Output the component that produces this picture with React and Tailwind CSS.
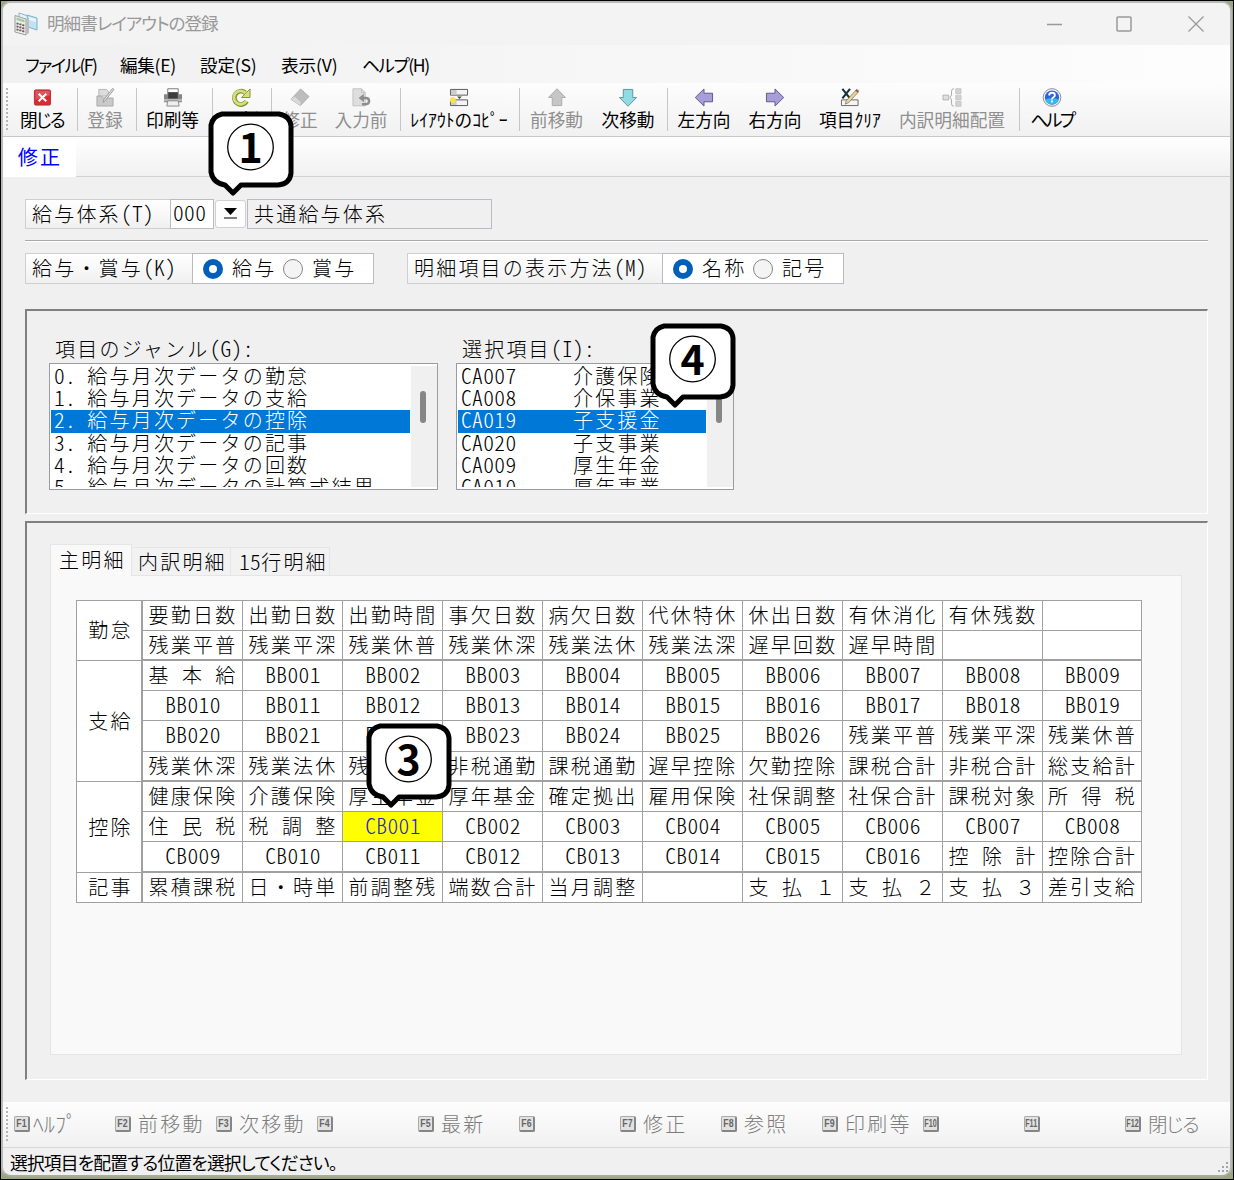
import React from "react";

const TOOLBAR = [
  {
    className: "w-[66px]",
    items: [{ icon: "close", label: "閉じる", width: "w-[60px]", text: "tracking-[-1.7px] [font-feature-settings:'palt']" }],
  },
  {
    className: "w-[59px]",
    items: [{ icon: "save", label: "登録", width: "w-[54px]", disabled: true }],
  },
  {
    className: "w-[76px]",
    items: [{ icon: "print", label: "印刷等", width: "w-[71px]" }],
  },
  {
    className: "w-[59px]",
    items: [{ icon: "refresh", label: "最新", width: "w-[56px]" }],
  },
  {
    className: "w-[129px]",
    items: [
      { icon: "eraser", label: "修正", width: "w-[56px]", disabled: true },
      { icon: "undo", label: "入力前", width: "w-[66px]", disabled: true },
    ],
  },
  {
    className: "w-[119px]",
    items: [{ icon: "copy", label: "ﾚｲｱｳﾄのｺﾋﾟｰ", width: "w-[116px]" }],
  },
  {
    className: "w-[148px]",
    items: [
      { icon: "up", label: "前移動", width: "w-[73px]", disabled: true },
      { icon: "down", label: "次移動", width: "w-[70px]" },
    ],
  },
  {
    className: "w-[352px]",
    items: [
      { icon: "left", label: "左方向", width: "w-[72px]" },
      { icon: "right", label: "右方向", width: "w-[70px]" },
      { icon: "clear", label: "項目ｸﾘｱ", width: "w-[80px]" },
      { icon: "tree", label: "内訳明細配置", width: "w-[124px]", disabled: true },
    ],
  },
  {
    className: "w-[64px] border-r-0",
    items: [{ icon: "help", label: "ヘルプ", width: "w-[64px]", text: "tracking-[-2.4px] [font-feature-settings:'palt']" }],
  },
];

const GENRES = [
  "0. 給与月次データの勤怠",
  "1. 給与月次データの支給",
  "2. 給与月次データの控除",
  "3. 給与月次データの記事",
  "4. 給与月次データの回数",
  "5. 給与月次データの計算式結果",
];

const ITEMS = [
  ["CA007", "介護保険"],
  ["CA008", "介保事業"],
  ["CA019", "子支援金"],
  ["CA020", "子支事業"],
  ["CA009", "厚生年金"],
  ["CA010", "厚年事業"],
];

const GROUPS = [
  {
    name: "勤怠",
    span: "row-span-2",
    rows: [
      ["要勤日数", "出勤日数", "出勤時間", "事欠日数", "病欠日数", "代休特休", "休出日数", "有休消化", "有休残数", ""],
      ["残業平普", "残業平深", "残業休普", "残業休深", "残業法休", "残業法深", "遅早回数", "遅早時間", "", ""],
    ],
  },
  {
    name: "支給",
    span: "row-span-4",
    rows: [
      ["基 本 給", "BB001", "BB002", "BB003", "BB004", "BB005", "BB006", "BB007", "BB008", "BB009"],
      ["BB010", "BB011", "BB012", "BB013", "BB014", "BB015", "BB016", "BB017", "BB018", "BB019"],
      ["BB020", "BB021", "BB022", "BB023", "BB024", "BB025", "BB026", "残業平普", "残業平深", "残業休普"],
      ["残業休深", "残業法休", "残業法深", "非税通勤", "課税通勤", "遅早控除", "欠勤控除", "課税合計", "非税合計", "総支給計"],
    ],
  },
  {
    name: "控除",
    span: "row-span-3",
    rows: [
      ["健康保険", "介護保険", "厚生年金", "厚年基金", "確定拠出", "雇用保険", "社保調整", "社保合計", "課税対象", "所 得 税"],
      ["住 民 税", "税 調 整", "CB001", "CB002", "CB003", "CB004", "CB005", "CB006", "CB007", "CB008"],
      ["CB009", "CB010", "CB011", "CB012", "CB013", "CB014", "CB015", "CB016", "控 除 計", "控除合計"],
    ],
  },
  {
    name: "記事",
    span: "row-span-1",
    rows: [
      ["累積課税", "日・時単", "前調整残", "端数合計", "当月調整", "", "支 払 １", "支 払 ２", "支 払 ３", "差引支給"],
    ],
  },
];

const FKEYS = ["ﾍﾙﾌﾟ", "前移動", "次移動", "", "最新", "", "修正", "参照", "印刷等", "", "", "閉じる"];

// Fixed pitch text: full width characters take 22.2px, half width ones 11.1px
function Mono({ children }) {
  const runs = children.match(/ |[!-~｡-ﾟ]+|[^ -~｡-ﾟ]+/g) || [];
  return (
    <span className="mb-[2px] inline-block h-[22px] whitespace-pre text-[20px] leading-[22px] font-light">
      {runs.map((run, i) => {
        if (run === " ") {
          return <span key={i} className="inline-block w-[11.1px]"> </span>;
        }
        if (/^[!-~｡-ﾟ]/.test(run)) {
          return (
            <span key={i} className="text-[21.5px] leading-[20px] tracking-[0.35px] [font-feature-settings:'hwid']">
              {run}
            </span>
          );
        }
        return <span key={i} className="tracking-[2.2px]">{run}</span>;
      })}
    </span>
  );
}

function Icon({ name }) {
  const common = { width: 20, height: 20, viewBox: "0 0 20 20", fill: "none" };
  switch (name) {
    case "close":
      return (
        <svg {...common}>
          <rect x="2" y="2" width="17" height="16" rx="1.5" fill="#d92b35" stroke="#a8323a" />
          <path d="M3 3h15v5L3 12z" fill="#ee6a6e" opacity=".6" />
          <path d="M6.500 6l8 8M14.500 6l-8 8" stroke="#fff" strokeWidth="2.2" />
        </svg>
      );
    case "save":
      return (
        <svg {...common}>
          <path d="M3.500 1.500h8l2 2v5h-10z" fill="#dcdcdc" stroke="#b5b5b5" />
          <path d="M1.500 8.500h5l1 2h11v8.500h-17z" fill="#c9c9c9" stroke="#ababab" />
          <path d="M19.500 1.500l-9.500 12-2 1.500.5-2.500 9.500-12z" fill="#e5e5e5" stroke="#999" />
        </svg>
      );
    case "print":
      return (
        <svg {...common}>
          <path d="M4.500.8h11v6h-11z" fill="#fff" stroke="#777" />
          <path d="M.5 6.500h4v-2h11v2h4V15H.5z" fill="#858585" />
          <path d="M5 4.500h10v6.500H5z" fill="#3d3d3d" />
          <path d="M.5 11.500h19V14H.5z" fill="#b8b8b8" />
          <path d="M4.500 13.500h11l1 5.500h-13z" fill="#eee" stroke="#888" />
        </svg>
      );
    case "refresh":
      return (
        <svg {...common}>
          <path d="M16 14A7 7 0 1 1 14.500 5" stroke="#7f9136" strokeWidth="5" />
          <path d="M19.500 1v9h-9z" fill="#d5e07a" stroke="#7f9136" strokeLinejoin="round" />
          <path d="M15.600 13.500A7 7 0 1 1 14.800 5.500" stroke="#d5e07a" strokeWidth="3" />
        </svg>
      );
    case "eraser":
      return (
        <svg {...common}>
          <path d="M10.500 1l9 8-9 9.500-10-6.500z" fill="#bdbdbd" stroke="#b0b0b0" />
          <path d="M.5 12l10 6.500v-4L4 9z" fill="#d9d9d9" />
        </svg>
      );
    case "undo":
      return (
        <svg {...common}>
          <path d="M1.500.8h9l4 4v14h-13z" fill="#dedede" stroke="#c2c2c2" />
          <path d="M10.500.8v4h4" stroke="#c2c2c2" />
          <path d="M12 10.500h3q3.500 0 3.500 3.200T15 17h-4" stroke="#8e8e8e" strokeWidth="2.600" />
          <path d="M13 6v9l-5.500-4.500z" fill="#8e8e8e" />
        </svg>
      );
    case "copy":
      return (
        <svg {...common}>
          <path d="M1 1.500h18v6H1zM1 12.500h18v6H1z" fill="#f4f4f4" stroke="#555" />
          <path d="M1.500 2h6v5h-6zM1.500 13h6v5h-6z" fill="#ccc" />
          <path d="M8 9h5l-2.500 2.500z" fill="#444" />
          <circle cx="3.500" cy="12.500" r="3" fill="#ffe14d" />
        </svg>
      );
    case "up":
      return (
        <svg {...common}>
          <path d="M10 .8l9 9.200h-4v8.500H5V10H1z" fill="#c6c6c6" stroke="#ababab" />
        </svg>
      );
    case "down":
      return (
        <svg {...common}>
          <path d="M10 19.200L1 10h4V1.500h10V10h4z" fill="#8fdde2" stroke="#5d929a" />
        </svg>
      );
    case "left":
      return (
        <svg {...common}>
          <path d="M.8 10L10 1v4.500h9v9h-9V19z" fill="#a79ddb" stroke="#5c5980" />
        </svg>
      );
    case "right":
      return (
        <svg {...common}>
          <path d="M19.200 10L10 1v4.500H1v9h9V19z" fill="#a79ddb" stroke="#5c5980" />
        </svg>
      );
    case "clear":
      return (
        <svg {...common}>
          <path d="M1 12.500h17.500v6H1z" fill="#f5f5f5" stroke="#666" />
          <path d="M2 1l8 10M10 1L2 11" stroke="#173238" strokeWidth="2.200" />
          <path d="M5 17l1-3.500L16.500 2l2.500 2L8.500 15.500z" fill="#ecd09a" stroke="#8a7450" strokeWidth=".8" />
          <path d="M15.500 3l1.500-2 2.500 2-1.500 2z" fill="#b0505a" />
        </svg>
      );
    case "tree":
      return (
        <svg {...common}>
          <path d="M.5 7.500h6v5h-6z" fill="#e0e0e0" stroke="#b0b0b0" />
          <path d="M12 .8q-2.500 0-2.500 2.500v4.200L8 10l1.500 2.500v4.200q0 2.500 2.500 2.500" stroke="#a8a8a8" />
          <path d="M14 .8h5.500v5H14zM14 7.500h5.500v5H14zM14 14.200h5.500v5H14z" fill="#d2d2d2" stroke="#c6c6c6" />
        </svg>
      );
    default:
      return (
        <svg {...common}>
          <circle cx="10" cy="10" r="9.300" fill="#f2f2f2" stroke="#8a8a8a" />
          <circle cx="10" cy="10" r="7.500" fill="#2d63d8" />
          <path d="M2.800 12a7.500 7.500 0 0 0 14.400 0Q10 9.500 2.800 12z" fill="#35b8f0" />
          <path d="M7 8q0-3 3-3t3 2.500q0 1.500-1.500 2.200T10 12" stroke="#fff" strokeWidth="1.900" />
          <rect x="9" y="13.200" width="2" height="2" fill="#fff" />
        </svg>
      );
  }
}

function AppIcon() {
  return (
    <svg width="24" height="24" viewBox="0 0 24 24" fill="none">
      <path d="M5 1l9 3v5L5 7z" fill="#e6f4fb" stroke="#8db5c9" />
      <path d="M13 3l10 3v12l-9-3z" fill="#bfe3f3" stroke="#7fb2ca" />
      <path d="M15 5l7 2v3l-7-2z" fill="#e9f7fd" />
      <path d="M1 3.500L12 7v16L1 20z" fill="#ededed" stroke="#9c9c9c" />
      <path d="M12 7l3-1v15l-3 2z" fill="#bdbdbd" />
      <path d="M2.500 5.500l8 2.500v2.500l-8-2.500z" fill="#9ecb9f" />
      <path d="M2.500 11.300l8 2.300M2.500 14.300l8 2.300M2.500 17.300l8 2.300" stroke="#705c5c" strokeWidth="1.900" strokeDasharray="2.100 .9" />
    </svg>
  );
}

function Callout({ number, className }) {
  return (
    <svg className={`absolute ${className}`} width="86" height="86" viewBox="0 0 86 86">
      <path
        d="M14 3h57q11 2 12 12v47q-1 11-13 12H33l-8 8-8-8q-12-2-14-13V14Q5 5 14 3z"
        fill="#fff"
        stroke="#000"
        strokeWidth="5"
        strokeLinejoin="round"
      />
      <circle cx="42.500" cy="36" r="22.800" fill="none" stroke="#000" strokeWidth="1.300" />
      <text x="42.500" y="51.500" textAnchor="middle" fontSize="41" fontWeight="700" fontFamily="'Noto Sans CJK JP', sans-serif">
        {number}
      </text>
    </svg>
  );
}

function Radio({ checked }) {
  return checked ? (
    <span className="h-5 w-5 rounded-full border-[6px] border-[#005fb8] bg-white" />
  ) : (
    <span className="h-5 w-5 rounded-full border border-[#868686] bg-[#f4f4f4]" />
  );
}

function Caption({ children, className }) {
  return (
    <div className={`flex items-center border border-r-0 border-[#cfcfcf] bg-gradient-to-b from-white to-[#f0f0f0] pt-px pl-[6px] ${className}`}>
      <Mono>{children}</Mono>
    </div>
  );
}

function RadioBox({ options }) {
  return (
    <div className="flex w-[182px] items-center border border-[#b9bac2] bg-white pl-[10px]">
      <Radio checked />
      <span className="mt-px ml-[9px] flex w-[51px]"><Mono>{options[0]}</Mono></span>
      <Radio />
      <span className="mt-px ml-[9px] flex"><Mono>{options[1]}</Mono></span>
    </div>
  );
}

function ListBox({ className, children }) {
  return (
    <div className={`flex h-[127px] border border-[#9a9ca4] bg-white py-[2px] pl-px ${className}`}>
      <div className="flex-1 overflow-hidden">{children}</div>
      <div className="ml-px w-[26px] bg-[#f0f0f0] pt-[25px] pl-[9px]">
        <div className="h-8 w-[6px] rounded-full bg-[#868686]" />
      </div>
    </div>
  );
}

function Grip({ className }) {
  return <div className={`w-[2px] bg-[repeating-linear-gradient(to_bottom,#b4b4b4_0_2px,transparent_2px_4px)] ${className}`} />;
}

export default function App() {
  return (
    <div
      lang="ja"
      className="relative h-[1180px] w-[1234px] overflow-hidden border border-black bg-[#9aa77c] font-['Noto_Sans_CJK_JP',sans-serif] text-black"
    >
      <div className="flex h-[1176px] w-[1231px] flex-col overflow-hidden rounded-[10px] border-2 border-[#b9b9b9] border-b-[#a9ab9d] bg-[#f0f0f0]">
        {/* Title bar */}
        <div className="flex h-[42px] shrink-0 items-center bg-[#f3f3f3] pl-[11px] text-[#999]">
          <AppIcon />
          <span className="mb-[2px] ml-[9px] text-[17.6px] tracking-[-1px] [font-feature-settings:'palt']">
            明細書レイアウトの登録
          </span>
          <svg className="mr-[24px] ml-auto" width="160" height="20" viewBox="0 0 160 20" fill="none" stroke="#999" strokeWidth="1.300">
            <path d="M1 10.500h15" />
            <rect x="71" y="3" width="14" height="14" rx="1" strokeWidth="1.500" />
            <path d="M142.500 2.500l15 15M157.500 2.500l-15 15" />
          </svg>
        </div>

        {/* Menu */}
        <div className="flex h-[38px] shrink-0 items-center bg-gradient-to-r from-[#f0f0f0] to-[#fdfdfd] pt-[2px] pl-[22px] text-[17.6px] [font-feature-settings:'palt']">
          <span className="w-[95px] tracking-[-1.6px]">ファイル(F)</span>
          <span className="w-[80px] tracking-[-0.3px]">編集(E)</span>
          <span className="w-[81px] tracking-[-0.2px]">設定(S)</span>
          <span className="w-[81px] tracking-[-0.1px]">表示(V)</span>
          <span className="tracking-[-1.4px]">ヘルプ(H)</span>
        </div>

        {/* Toolbar */}
        <div className="flex h-[54px] shrink-0 border-b border-[#c9c9c9] bg-gradient-to-b from-[#fdfdfd] to-[#f1f1f1]">
          <Grip className="mt-[5px] mr-[4px] ml-[3px] h-[43px]" />
          {TOOLBAR.map((group, i) => (
            <div key={i} className={`mt-[5px] flex h-[43px] shrink-0 border-r border-[#c6c6c6] ${group.className}`}>
              {group.items.map((item) => (
                <div
                  key={item.label}
                  className={`flex shrink-0 flex-col items-center whitespace-nowrap ${item.width} ${item.disabled ? "text-[#8f8f8f]" : ""}`}
                >
                  <Icon name={item.icon} />
                  <span className={`text-[17.7px] leading-[24px] ${item.text || ""}`}>{item.label}</span>
                </div>
              ))}
            </div>
          ))}
        </div>

        {/* Mode tab */}
        <div className="flex h-[40px] shrink-0 border-b border-[#d2d2d2] bg-gradient-to-b from-white to-[#f1f1f1]">
          <div className="flex h-[40px] w-[73px] items-center justify-center bg-white pl-px text-[20px] tracking-[2.2px] text-[#0000ff]">
            修正
          </div>
        </div>

        {/* Body */}
        <div className="flex h-[925px] shrink-0 flex-col pt-[22px] pr-[22px] pl-[22px]">
          <div className="flex h-[30px]">
            <Caption className="w-[145px]">給与体系(T)</Caption>
            <div className="flex w-[44px] items-center border border-[#b9bac2] bg-white pl-[2px]">
              <Mono>000</Mono>
            </div>
            <button className="mx-[1px] my-px flex w-[31px] items-center justify-center rounded-[3px] border border-[#d0d0d0] bg-[#fdfdfd]">
              <svg width="15" height="14" viewBox="0 0 15 14">
                <path d="M1 1h13L7.500 8z" fill="#000" />
                <path d="M1 11h13" stroke="#000" strokeWidth="1.200" />
              </svg>
            </button>
            <div className="flex w-[245px] items-center border border-[#b9bac2] pt-px pl-[6px]">
              <Mono>共通給与体系</Mono>
            </div>
          </div>

          <div className="mt-[11px] h-[2px] border-t border-b border-t-[#a9a9a9] border-b-white" />

          <div className="mt-[11px] flex h-[31px]">
            <Caption className="w-[167px]">給与・賞与(K)</Caption>
            <RadioBox options={["給与", "賞与"]} />
            <Caption className="ml-[33px] w-[255px]">明細項目の表示方法(M)</Caption>
            <RadioBox options={["名称", "記号"]} />
          </div>

          <div className="mt-[25px] flex h-[205px] shrink-0 border-t-2 border-r border-b border-l-2 border-t-[#808080] border-r-white border-b-white border-l-[#808080] pt-[26px] pl-[22px]">
            <div>
              <div className="flex h-[26px] items-center pb-px pl-[6px]"><Mono>項目のジャンル(G):</Mono></div>
              <ListBox className="w-[389px]">
                {GENRES.map((genre, i) => (
                  <div key={genre} className={`flex h-[22.2px] items-center pl-[3px] ${i === 2 ? "bg-[#0078d7] text-white" : ""}`}>
                    <Mono>{genre}</Mono>
                  </div>
                ))}
              </ListBox>
            </div>
            <div className="ml-[18px]">
              <div className="flex h-[26px] items-center pb-px pl-[6px]"><Mono>選択項目(I):</Mono></div>
              <ListBox className="w-[278px]">
                {ITEMS.map(([code, name], i) => (
                  <div key={code} className={`flex h-[22.2px] items-center pl-[3px] ${i === 2 ? "bg-[#0078d7] text-white" : ""}`}>
                    <span className="flex w-[112px]"><Mono>{code}</Mono></span>
                    <Mono>{name}</Mono>
                  </div>
                ))}
              </ListBox>
            </div>
          </div>

          <div className="mt-[7px] h-[559px] shrink-0 border-t-2 border-r border-b border-l-2 border-t-[#808080] border-r-white border-b-white border-l-[#808080] pt-[22px] pl-[23px]">
            <div className="flex h-[30px] items-end">
              <div className="z-10 -mb-px flex h-[32px] w-[82px] items-center border border-b-0 border-[#e5e5e5] bg-[#f9f9f9] pt-px pl-[8px]">
                <Mono>主明細</Mono>
              </div>
              <div className="flex h-[28px] w-[99px] items-center border border-b-0 border-l-0 border-[#e5e5e5] bg-[#f2f2f2] pt-[3px] pl-[6px]">
                <Mono>内訳明細</Mono>
              </div>
              <div className="flex h-[28px] w-[99px] items-center border border-b-0 border-l-0 border-[#e5e5e5] bg-[#f2f2f2] pt-[3px] pl-[8px]">
                <Mono>15行明細</Mono>
              </div>
            </div>
            <div className="h-[480px] w-[1132px] border border-[#e5e5e5] bg-[#f9f9f9] pt-[24px] pl-[25px]">
              <div className="grid w-[1066px] grid-cols-[66px_repeat(9,100px)_99px] grid-rows-[30px_30px_30px_30px_31px_30px_30px_30px_31px_30px] border-t border-l border-[#a0a0a0] bg-white">
                {GROUPS.map((group, g) => (
                  <React.Fragment key={group.name}>
                    <div
                      className={`flex items-center justify-center border-r-2 border-b border-[#a0a0a0] pt-px pl-[3px] ${group.span}`}
                    >
                      <Mono>{group.name}</Mono>
                    </div>
                    {group.rows.map((row, r) =>
                      row.map((cell, c) => (
                        <div
                          key={`${r}-${c}`}
                          className={`flex items-center justify-center border-r border-b border-[#a0a0a0] pl-px ${
                            r === group.rows.length - 1 && g < 3 ? "border-b-2 pt-px" : ""
                          } ${cell === "CB001" ? "bg-[#ffff00] text-[#2222cc]" : ""}`}
                        >
                          <Mono>{cell}</Mono>
                        </div>
                      ))
                    )}
                  </React.Fragment>
                ))}
              </div>
            </div>
          </div>
        </div>

        {/* Function keys */}
        <div className="flex h-[46px] shrink-0 border-b border-[#d8d8d8] bg-gradient-to-b from-[#fdfdfd] to-[#f1f1f1]">
          <Grip className="mt-[5px] mr-[6px] ml-[3px] h-[34px]" />
          {FKEYS.map((label, i) => (
            <div key={i} className="flex w-[101px] shrink-0 items-center pb-[2px] whitespace-nowrap text-[#7c7c7c]">
              <span className="flex h-4 w-4 shrink-0 items-center justify-center rounded-[2px] border border-r-2 border-b-2 border-[#858585] border-t-[#aaa] border-l-[#aaa] bg-[#e2e2e2]">
                <span
                  className={`font-['Liberation_Sans',sans-serif] text-[11px] leading-none font-bold text-[#666] ${
                    i < 9 ? "scale-x-80" : "scale-x-65"
                  }`}
                >
                  F{i + 1}
                </span>
              </span>
              {i === 11 ? (
                <span className="ml-[7px] text-[19.5px] font-light tracking-[-1.2px] [font-feature-settings:'palt']">{label}</span>
              ) : (
                <span className={`mt-[2px] flex ${i === 0 ? "ml-[3px]" : "ml-[7px]"}`}><Mono>{label}</Mono></span>
              )}
            </div>
          ))}
        </div>

        {/* Status bar */}
        <div className="flex flex-1 items-center justify-between pt-px pl-[7px]">
          <span className="text-[17.8px] tracking-[-0.85px] [font-feature-settings:'palt']">
            選択項目を配置する位置を選択してください。
          </span>
          <svg className="self-end" width="12" height="14" viewBox="0 0 12 14" fill="#a5a5a5">
            <path d="M8 0h2v2H8zM4 4h2v2H4zM8 4h2v2H8zM0 8h2v2H0zM4 8h2v2H4zM8 8h2v2H8z" />
          </svg>
        </div>
      </div>

      <Callout number="1" className="top-[110px] left-[207px]" />
      <Callout number="4" className="top-[322px] left-[649px]" />
      <Callout number="3" className="top-[722px] left-[365px]" />
    </div>
  );
}
